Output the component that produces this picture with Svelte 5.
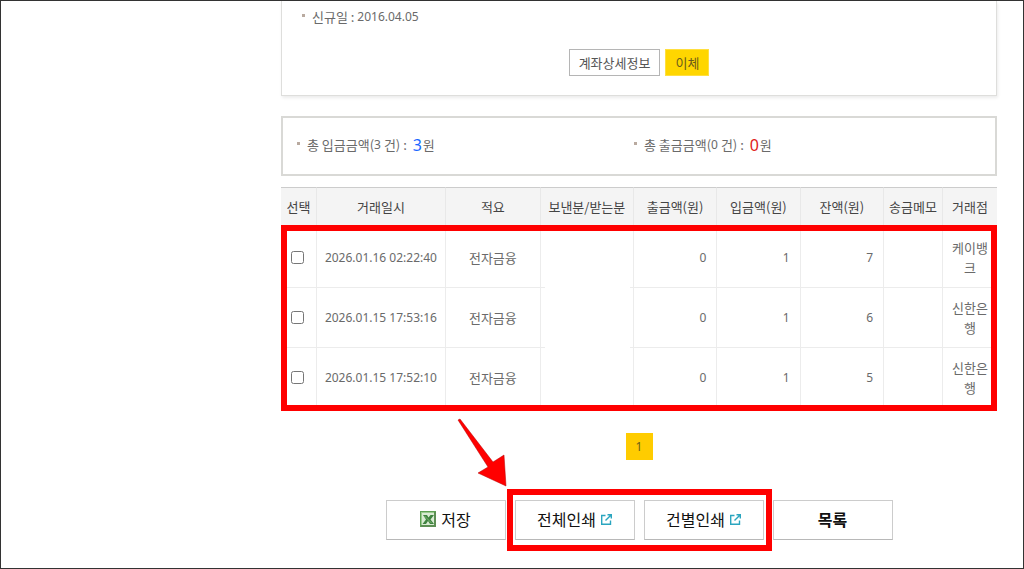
<script>
  let transactions = $state([
    { date: '2026.01.16 02:22:40', type: '전자금융', withdrawal: 0, deposit: 1, balance: 7, memo: '', branch: '케이뱅크', selected: false },
    { date: '2026.01.15 17:53:16', type: '전자금융', withdrawal: 0, deposit: 1, balance: 6, memo: '', branch: '신한은행', selected: false },
    { date: '2026.01.15 17:52:10', type: '전자금융', withdrawal: 0, deposit: 1, balance: 5, memo: '', branch: '신한은행', selected: false }
  ]);
</script>

{#snippet popupIcon()}
  <svg class="popup-icon" width="11" height="11" viewBox="0 0 11 11" fill="none" stroke="#2aa5bf" stroke-width="1.4" aria-hidden="true">
    <path d="M4.500 1.500H.7v8.800h8.800V6.500" />
    <path d="M6.500 .7h3.800v3.800M10.300 .7L4.500 6.500" />
  </svg>
{/snippet}

<main class="page">
  <section class="account">
    <p class="bullet">신규일 : <span class="num">2016.04.05</span></p>
    <div class="account-buttons">
      <button class="btn-small">계좌상세정보</button>
      <button class="btn-small yellow">이체</button>
    </div>
  </section>

  <section class="summary">
    <p class="bullet">총 입금금액(<span class="num">3</span> 건) : <strong class="in">3</strong>원</p>
    <p class="bullet">총 출금금액(<span class="num">0</span> 건) : <strong class="out">0</strong>원</p>
  </section>

  <div class="table-wrap">
    <table>
      <colgroup>
        <col class="c-check" /><col class="c-date" /><col class="c-type" />
        <col class="c-name" /><col class="c-money" /><col class="c-money" />
        <col class="c-money" /><col class="c-memo" /><col class="c-branch" />
      </colgroup>
      <thead>
        <tr>
          <th>선택</th>
          <th>거래일시</th>
          <th>적요</th>
          <th>보낸분/받는분</th>
          <th>출금액(원)</th>
          <th>입금액(원)</th>
          <th>잔액(원)</th>
          <th>송금메모</th>
          <th>거래점</th>
        </tr>
      </thead>
      <tbody>
        {#each transactions as row}
          <tr>
            <td class="check"><input type="checkbox" aria-label={row.date} bind:checked={row.selected} /></td>
            <td class="num">{row.date}</td>
            <td>{row.type}</td>
            <td class="name"></td>
            <td class="num money">{row.withdrawal}</td>
            <td class="num money">{row.deposit}</td>
            <td class="num money">{row.balance}</td>
            <td>{row.memo}</td>
            <td class="branch">{row.branch}</td>
          </tr>
        {/each}
      </tbody>
    </table>
    <div class="mark mark-table"></div>
  </div>

  <nav class="paging">
    <button class="num">1</button>
  </nav>

  <div class="actions">
    <button class="btn">
      <svg width="16" height="16" viewBox="0 0 16 16" aria-hidden="true">
        <rect width="16" height="16" fill="#5da052" />
        <rect x="1" y="1" width="14" height="14" fill="#9acb8f" />
        <rect x="2" y="2" width="12" height="12" fill="#d9ebd3" />
        <path d="M14 1h2v15H1v-2h13z" fill="#5d8f54" />
        <path d="M3 4h4l1.500 2.500L10.500 4H14l-3.500 4.500L14 13h-4l-2-3-2 3H2.500l3.500-4.500z" fill="#3f8340" />
        <path d="M4.500 5L11.500 12" stroke="#7cb871" />
      </svg>
      저장
    </button>
    <div class="print-group">
      <button class="btn">전체인쇄{@render popupIcon()}</button>
      <button class="btn">건별인쇄{@render popupIcon()}</button>
      <div class="mark mark-print"></div>
      <svg class="arrow" width="50" height="70" viewBox="0 0 50 70" aria-hidden="true">
        <path d="M1 2L3 1L36 44L47 37L49 68L21 55L31 49Z" fill="#f00" stroke="#b30000" stroke-width=".5" />
      </svg>
    </div>
    <button class="btn bold">목록</button>
  </div>
</main>

<style>
  :global(body) {
    margin: 0;
    background: #fff;
  }
  .page {
    box-sizing: border-box;
    min-height: 100vh;
    padding: 0 26px 0 280px;
    border: 1px solid #333;
    color: #6a6a6a;
    font-family: 'Noto Sans CJK KR', sans-serif;
    font-size: 13px;
    line-height: 20px;
  }
  p { margin: 0; }
  button {
    padding: 0;
    font-family: inherit;
    cursor: pointer;
  }
  .num {
    font-family: 'Noto Sans', sans-serif;
    font-size: 12px;
  }
  .bullet {
    display: flex;
    align-items: center;
    white-space: pre;
  }
  .bullet::before {
    content: '';
    width: 3px;
    height: 3px;
    margin: 0 7px 3px 0;
    background: #b9aaa0;
  }

  .account {
    padding: 6px 20px 19px;
    border: 1px solid #dededc;
    border-top: 0;
    box-shadow: 1px 2px 3px rgba(0, 0, 0, 0.08);
  }
  .account-buttons {
    display: flex;
    justify-content: center;
    gap: 5px;
    margin-top: 22px;
  }
  .btn-small {
    height: 27px;
    padding: 0 9px;
    border: 1px solid #b5b5b5;
    background: #fff;
    color: #555;
    font-size: 13px;
  }
  .btn-small.yellow {
    border-color: #ffdf40;
    background: #ffd600;
    color: #6b5c1c;
  }

  .summary {
    display: grid;
    grid-template-columns: 1fr 1fr;
    margin-top: 20px;
    padding: 17px 24px 19px 14px;
    border: 2px solid #d9d9d6;
  }
  .summary strong {
    margin: 0 1px 0 3px;
    font-family: 'Noto Sans', sans-serif;
    font-size: 16px;
    font-weight: 400;
  }
  .in { color: #1a66ff; }
  .out { color: #e02020; }

  .table-wrap {
    position: relative;
    margin-top: 11px;
  }
  table {
    width: 100%;
    table-layout: fixed;
    border-collapse: separate;
    border-spacing: 0;
    text-align: center;
  }
  .c-check { width: 35px; }
  .c-date { width: 18%; }
  .c-type { width: 95px; }
  .c-name { width: 93px; }
  .c-memo { width: 59px; }
  .c-branch { width: 55px; }
  th {
    height: 37px;
    padding: 0 0 2px;
    border-top: 1px solid #ccc;
    border-bottom: 1px solid #ccc;
    border-left: 1px solid #e8e8e8;
    background: #f4f4f4;
    color: #444;
    font-weight: 400;
    white-space: nowrap;
  }
  td {
    height: 59px;
    padding: 0;
    border-bottom: 1px solid #ececec;
    border-left: 1px solid #ececec;
  }
  th:first-child, td:first-child { border-left: 0; }
  td.check { text-align: left; }
  td.check input {
    display: block;
    width: 13px;
    height: 13px;
    margin: 0 0 0 10px;
  }
  td.money {
    padding-right: 10px;
    text-align: right;
  }
  td.branch {
    padding: 0 8px;
    word-break: break-all;
  }
  /* counterparty is blanked out, row lines included */
  td.name { position: relative; }
  td.name::after {
    content: '';
    position: absolute;
    right: 3px;
    bottom: -1px;
    left: 4px;
    height: 1px;
    background: #fff;
  }

  .mark {
    position: absolute;
    border: 6px solid #f00;
    pointer-events: none;
  }
  .mark-table { inset: 38px 0 -3px; }
  .mark-print { inset: -11px -8px; }

  .paging {
    display: flex;
    justify-content: center;
    margin-top: 25px;
  }
  .paging button {
    width: 27px;
    height: 27px;
    border: 0;
    background: #fc0;
    color: #6b5c1c;
  }

  .actions {
    display: flex;
    justify-content: center;
    gap: 9px;
    margin-top: 40px;
  }
  .print-group {
    position: relative;
    display: flex;
    gap: 9px;
  }
  .btn {
    display: flex;
    align-items: center;
    justify-content: center;
    gap: 5px;
    width: 120px;
    height: 40px;
    padding-bottom: 2px;
    border: 1px solid #ccc;
    border-bottom-color: #b8b8b8;
    background: #fff;
    color: #111;
    font-size: 16px;
  }
  .bold { font-weight: 700; }
  .arrow {
    position: absolute;
    top: -82px;
    left: -58px;
  }
</style>
